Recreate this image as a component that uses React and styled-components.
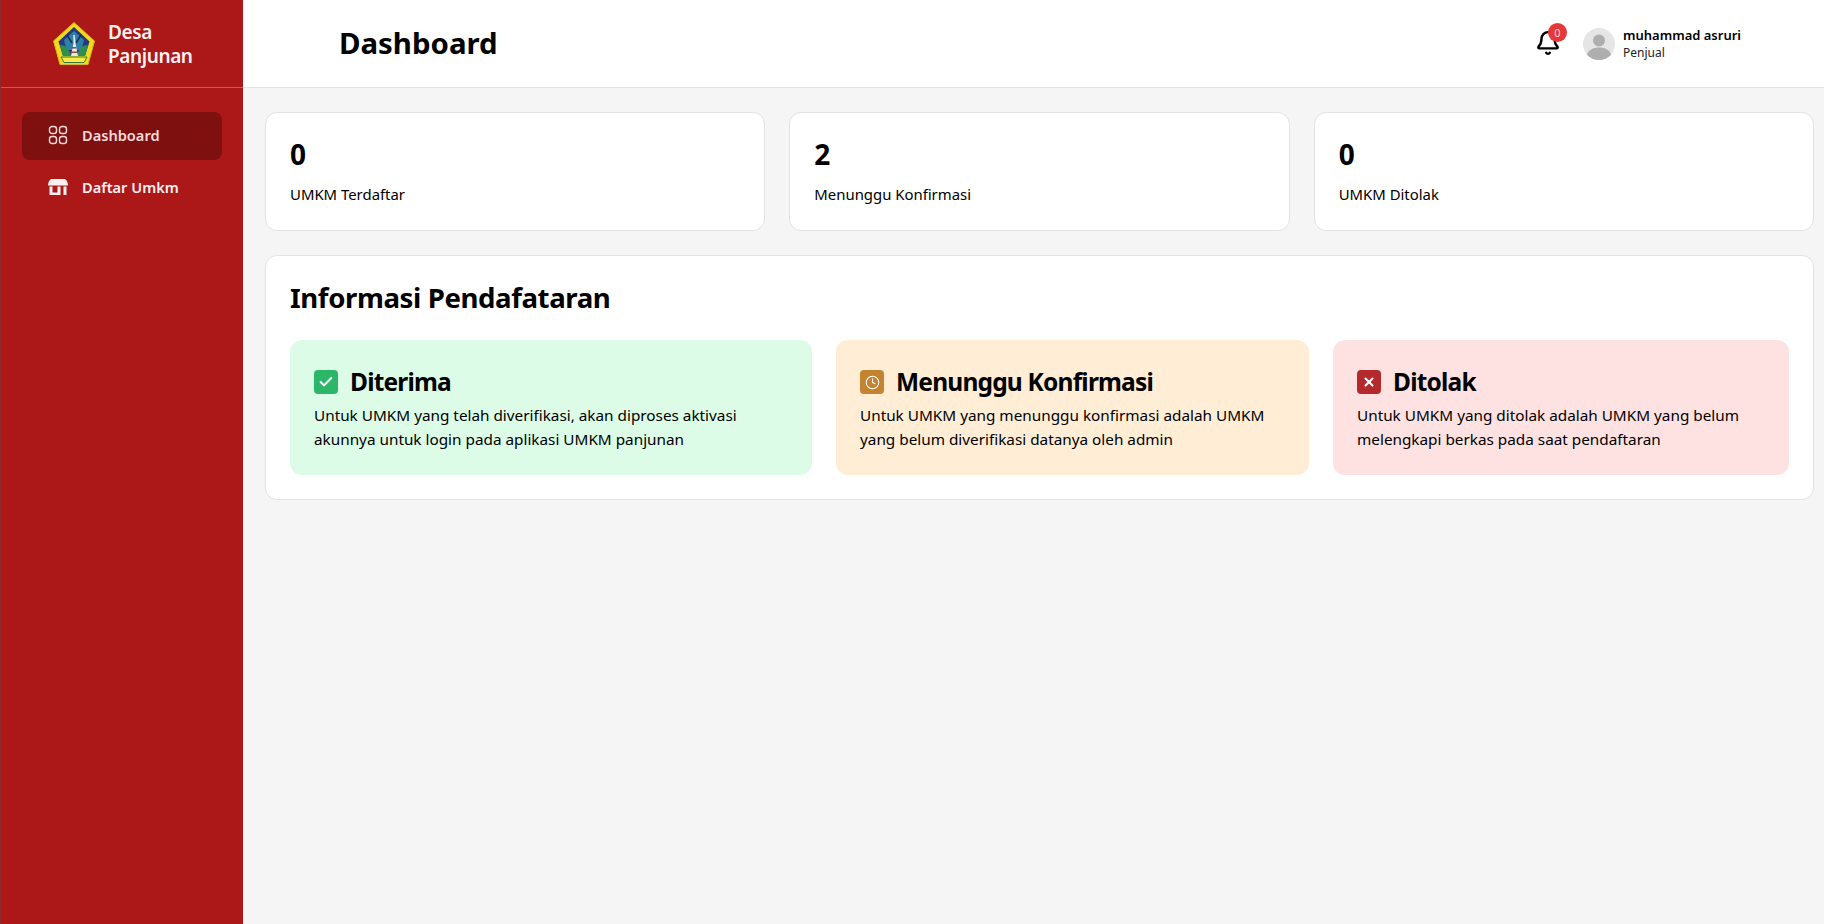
import React from 'react'
import styled, { createGlobalStyle } from 'styled-components'
import { Bell, Check, Clock, X } from 'lucide-react'

const GlobalStyle = createGlobalStyle`
    * { box-sizing: border-box; }
    html, body { margin: 0; height: 100%; }
    body {
        font-family: "Noto Sans", "Open Sans", sans-serif;
        color: #000;
        background: #f5f5f5;
    }
`

const Page = styled.div`
    display: grid;
    grid-template-columns: 243px 1fr;
    height: 924px;
    overflow: hidden;
`

const Sidebar = styled.aside`
    background: #ac1818;
    border-left: 1px solid #8c2a2a;
    color: #fff;
`

const Brand = styled.div`
    height: 88px;
    display: flex;
    align-items: center;
    gap: 13px;
    padding-left: 52px;
    border-bottom: 1px solid #d9534f;
`

const BrandName = styled.div`
    font-size: 19px;
    font-weight: 600;
    line-height: 24px;
    letter-spacing: -0.4px;
    color: #fdf2f2;
`

const Nav = styled.nav`
    display: flex;
    flex-direction: column;
    gap: 4px;
    padding: 24px 21px;
`

const NavItem = styled.div`
    height: 48px;
    display: flex;
    align-items: center;
    gap: 14px;
    padding: 0 0 2px 26px;
    border-radius: 8px;
    font-size: 14.6px;
    font-weight: 600;
    background: ${props => props.$active ? '#7f1010' : 'transparent'};
    color: ${props => props.$active ? '#f6dada' : '#fdf0f0'};
`

const Main = styled.div`
    display: flex;
    flex-direction: column;
    min-width: 0;
`

const Header = styled.header`
    height: 88px;
    display: flex;
    align-items: center;
    padding: 0 73px 0 96px;
    background: #fff;
    border-bottom: 1px solid #e2e2e2;
`

const PageTitle = styled.h1`
    margin: 0 0 2px;
    flex: 1;
    font-size: 29.4px;
    font-weight: 700;
`

const BellWrap = styled.div`
    position: relative;
    width: 28px;
    height: 28px;
    margin-right: 20px;
`

const Badge = styled.span`
    position: absolute;
    top: -7px;
    left: 13px;
    width: 19px;
    height: 19px;
    border-radius: 50%;
    background: #e5383b;
    color: #ffd6d6;
    font-size: 11px;
    line-height: 19px;
    text-align: center;
`

const UserBlock = styled.div`
    display: flex;
    align-items: center;
    gap: 8px;
    width: 168px;
`

const UserName = styled.div`
    font-size: 13px;
    font-weight: 600;
    line-height: 18px;
    white-space: nowrap;
`

const UserRole = styled.div`
    font-size: 12px;
    line-height: 18px;
    color: #222;
`

const Content = styled.main`
    display: flex;
    flex-direction: column;
    gap: 24px;
    padding: 24px 10px 0 22px;
`

const StatRow = styled.div`
    display: grid;
    grid-template-columns: repeat(3, 1fr);
    gap: 24px;
`

const Card = styled.section`
    background: #fff;
    border: 1px solid #e3e3e3;
    border-radius: 12px;
    padding: 24px;
`

const StatValue = styled.div`
    font-size: 28px;
    font-weight: 700;
    line-height: 34px;
`

const StatLabel = styled.div`
    margin-top: 11px;
    font-size: 14.9px;
    line-height: 24px;
`

const SectionTitle = styled.h2`
    margin: 0 0 26px;
    font-size: 27.6px;
    font-weight: 700;
    line-height: 34px;
    letter-spacing: -0.4px;
`

const InfoRow = styled.div`
    display: grid;
    grid-template-columns: 522fr 473fr 456fr;
    gap: 24px;
`

const InfoBox = styled.div`
    height: 135px;
    padding: 24px;
    border-radius: 12px;
    background: ${props => props.$bg};
`

const InfoHead = styled.div`
    display: flex;
    align-items: center;
    gap: 12px;
`

const IconTile = styled.span`
    width: 24px;
    height: 24px;
    display: flex;
    align-items: center;
    justify-content: center;
    border-radius: 4px;
    background: ${props => props.$bg};
    color: #fff;
`

const InfoTitle = styled.h3`
    margin: 0;
    font-size: 24.5px;
    font-weight: 700;
    line-height: 36px;
    letter-spacing: -0.8px;
`

const InfoText = styled.p`
    margin: 3px 0 0;
    font-size: 15.3px;
    line-height: 24px;
`

const DashboardIcon = () => (
    <svg width="20" height="20" viewBox="0 0 20 20" fill="none" stroke="currentColor" strokeWidth="1.4">
        <rect x="1.5" y="1.5" width="7" height="7" rx="2.6" />
        <rect x="11.5" y="1.5" width="7" height="7" rx="2.6" />
        <rect x="1.5" y="11.5" width="7" height="7" rx="2.6" />
        <rect x="11.5" y="11.5" width="7" height="7" rx="2.6" />
    </svg>
)

const StoreIcon = () => (
    <svg width="20" height="20" viewBox="0 0 20 20" fill="currentColor">
        <path d="M4 2h12c2 0 3.800 2.600 4 6.500H0C.2 4.600 2 2 4 2z" />
        <path d="M1.500 9.500h3v8.500h-3zM15.500 9.500h3v8.500h-3zM4.500 15.500h8v2.500h-8zM9.500 9.500h3v6h-3z" />
    </svg>
)

const Avatar = () => (
    <svg width="32" height="32" viewBox="0 0 32 32">
        <circle cx="16" cy="16" r="16" fill="#e5e5e5" />
        <circle cx="16" cy="12.500" r="6" fill="#aeaeae" />
        <path d="M4 27c1-5 6-7.500 12-7.500S27 22 28 27c-3 3-7.500 5-12 5S7 30 4 27z" fill="#aeaeae" />
    </svg>
)

const Logo = () => (
    <svg width="42" height="44" viewBox="0 0 42 44">
        <path d="M21 .5 41.500 19 35 42.500H7L.5 19z" fill="#f2d91c" stroke="#d8b51a" strokeWidth="1" />
        <path d="M21 5 36.500 19.500 32 34H10L5.500 19.500z" fill="#24397f" />
        <path d="M21 9 31 18l-2.500 10h-15L11 18z" fill="#2f80a8" />
        <path d="M7 23c5 0 9 3 11 11h-8zM35 23c-5 0-9 3-11 11h8z" fill="#2f8f4e" />
        <path d="M14 13l5 8M28 13l-5 8" stroke="#1b2a55" strokeWidth="1.500" />
        <path d="M20.300 13h1.400l.8 8 2.500 13h-7l2.500-13z" fill="#e9e9e9" />
        <path d="M18.500 25h5v1.500h-5zM17.500 29.500h7V31h-7z" fill="#8f4a4a" />
        <path d="M8 35h26l-3 5.500H11z" fill="#f7ea4a" stroke="#3b7a3b" strokeWidth="1" />
    </svg>
)

const stats = [
    { value: 0, label: 'UMKM Terdaftar' },
    { value: 2, label: 'Menunggu Konfirmasi' },
    { value: 0, label: 'UMKM Ditolak' },
]

const infos = [
    {
        title: 'Diterima',
        bg: '#dcfce7',
        tile: '#2cb66a',
        icon: <Check size={16} strokeWidth={3} />,
        lines: ['Untuk UMKM yang telah diverifikasi, akan diproses aktivasi', 'akunnya untuk login pada aplikasi UMKM panjunan'],
    },
    {
        title: 'Menunggu Konfirmasi',
        bg: '#ffedd5',
        tile: '#c4832f',
        icon: <Clock size={15} strokeWidth={1.8} />,
        lines: ['Untuk UMKM yang menunggu konfirmasi adalah UMKM', 'yang belum diverifikasi datanya oleh admin'],
    },
    {
        title: 'Ditolak',
        bg: '#fee2e2',
        tile: '#b42a2c',
        icon: <X size={14} strokeWidth={3.5} />,
        lines: ['Untuk UMKM yang ditolak adalah UMKM yang belum', 'melengkapi berkas pada saat pendaftaran'],
    },
]

const App = () => (
    <Page>
        <GlobalStyle />
        <Sidebar>
            <Brand>
                <Logo />
                <BrandName>Desa<br />Panjunan</BrandName>
            </Brand>
            <Nav>
                <NavItem $active><DashboardIcon />Dashboard</NavItem>
                <NavItem><StoreIcon />Daftar Umkm</NavItem>
            </Nav>
        </Sidebar>
        <Main>
            <Header>
                <PageTitle>Dashboard</PageTitle>
                <BellWrap>
                    <Bell size={26} strokeWidth={2.2} />
                    <Badge>0</Badge>
                </BellWrap>
                <UserBlock>
                    <Avatar />
                    <div>
                        <UserName>muhammad asruri</UserName>
                        <UserRole>Penjual</UserRole>
                    </div>
                </UserBlock>
            </Header>
            <Content>
                <StatRow>
                    {stats.map(s => (
                        <Card key={s.label}>
                            <StatValue>{s.value}</StatValue>
                            <StatLabel>{s.label}</StatLabel>
                        </Card>
                    ))}
                </StatRow>
                <Card>
                    <SectionTitle>Informasi Pendafataran</SectionTitle>
                    <InfoRow>
                        {infos.map(i => (
                            <InfoBox key={i.title} $bg={i.bg}>
                                <InfoHead>
                                    <IconTile $bg={i.tile}>{i.icon}</IconTile>
                                    <InfoTitle>{i.title}</InfoTitle>
                                </InfoHead>
                                <InfoText>{i.lines[0]}<br />{i.lines[1]}</InfoText>
                            </InfoBox>
                        ))}
                    </InfoRow>
                </Card>
            </Content>
        </Main>
    </Page>
)

export default App
